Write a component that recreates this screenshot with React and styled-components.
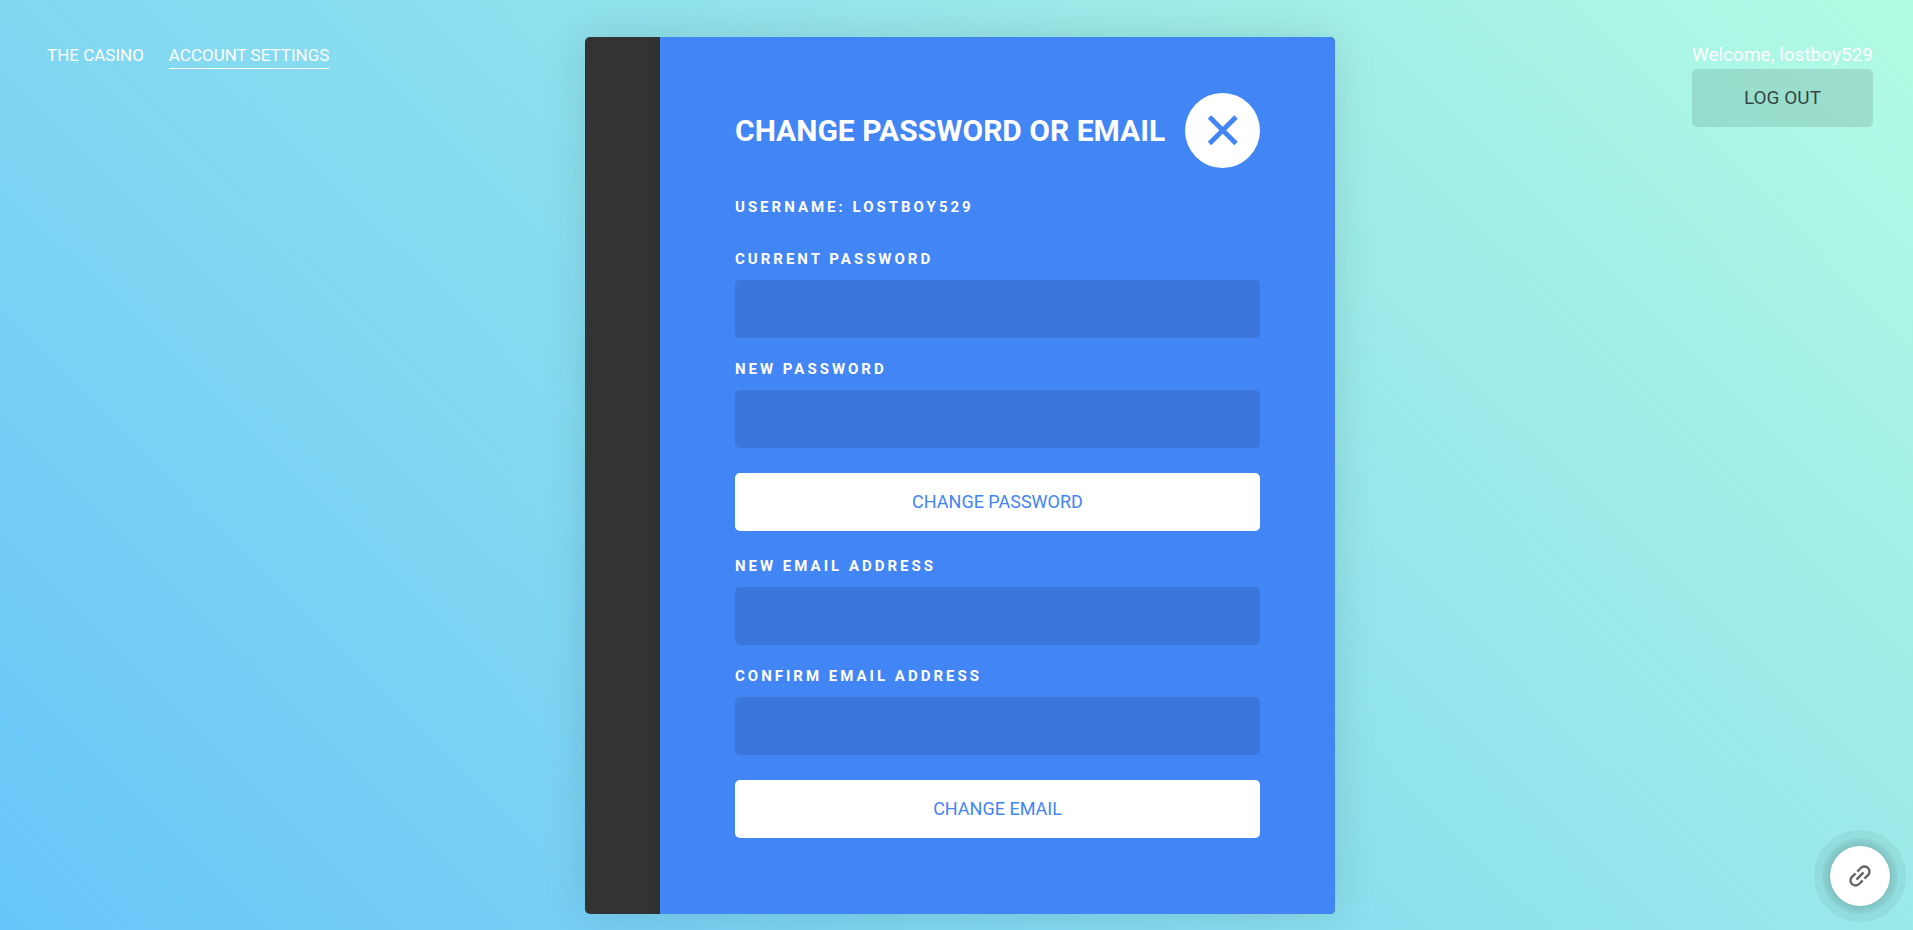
import React from "react";
import styled, { createGlobalStyle } from "styled-components";

const GlobalStyle = createGlobalStyle`
  * { box-sizing: border-box; }
  body {
    margin: 0;
    font-family: Roboto, "Liberation Sans", sans-serif;
  }
  button, input { font-family: inherit; }
`;

const Page = styled.div`
  display: grid;
  grid-template-columns: minmax(0, 1fr) minmax(0, 750px) minmax(0, 1fr);
  align-items: start;
  min-height: 100vh;
  padding: 37px 40px 16px 47px;
  background: linear-gradient(45deg, #68c5f9, #b2fbe3);
`;

const Nav = styled.nav`
  display: flex;
  gap: 25px;
  padding-top: 6px;
`;

const NavLink = styled.a`
  color: #fff;
  font-size: 17px;
  line-height: 25px;
  text-decoration: none;
  text-transform: uppercase;
  white-space: nowrap;
  border-bottom: 1px solid ${(p) => (p.$active ? "#fff" : "transparent")};
`;

const Session = styled.div`
  justify-self: end;
  display: flex;
  flex-direction: column;
  gap: 2px;
  padding-top: 6px;
`;

const Welcome = styled.span`
  color: #fff;
  font-size: 19px;
  line-height: 24px;
  white-space: nowrap;
`;

const Button = styled.button`
  height: 58px;
  padding: 0 20px 2px;
  border: 0;
  border-radius: 5px;
  background: ${(p) => (p.$muted ? "rgba(0, 0, 0, 0.1)" : "#fff")};
  color: ${(p) => (p.$muted ? "rgba(0, 0, 0, 0.7)" : "#4285f4")};
  font-size: ${(p) => (p.$muted ? "19px" : "18px")};
  text-transform: uppercase;
  cursor: pointer;
`;

const Card = styled.main`
  display: flex;
  overflow: hidden;
  border-radius: 5px;
  background: #333;
  box-shadow: 0 0 45px rgba(0, 0, 0, 0.12);
`;

const Rail = styled.div`
  flex: 0 0 75px;
`;

const Panel = styled.section`
  flex: 1;
  padding: 56px 75px 76px;
  background: #4285f4;
  box-shadow: 0 0 10px rgba(0, 0, 0, 0.2);
`;

const PanelHeader = styled.header`
  display: flex;
  align-items: center;
  justify-content: space-between;
  margin-bottom: 28px;
`;

const Title = styled.h1`
  margin: 0;
  color: #fff;
  font-size: 30px;
  font-weight: 700;
  line-height: 36px;
  text-transform: uppercase;
  white-space: nowrap;
`;

const CloseButton = styled.button`
  display: grid;
  place-items: center;
  width: 75px;
  height: 75px;
  padding: 0;
  border: 0;
  border-radius: 50%;
  background: #fff;
  color: #4285f4;
  cursor: pointer;
`;

const labelText = `
  color: #fff;
  font-size: 15px;
  font-weight: 700;
  line-height: 22px;
  letter-spacing: 3px;
  text-transform: uppercase;
`;

const Username = styled.p`
  ${labelText}
  margin: 0 0 30px;
`;

const Form = styled.form`
  display: flex;
  flex-direction: column;
  gap: 20px;

  & + & {
    margin-top: 24px;
  }

  ${Button} {
    margin-top: 5px;
  }
`;

const Field = styled.div`
  display: flex;
  flex-direction: column;
  gap: 10px;
`;

const Label = styled.label`
  ${labelText}
`;

const Input = styled.input`
  width: 100%;
  height: 58px;
  padding: 0 20px;
  border: 0;
  border-radius: 5px;
  background: rgba(0, 0, 0, 0.1);
  color: #fff;
  font-size: 18px;
`;

const LinkFab = styled.button`
  position: fixed;
  right: 23px;
  bottom: 24px;
  display: grid;
  place-items: center;
  width: 60px;
  height: 60px;
  padding: 0;
  border: 0;
  border-radius: 50%;
  background: #fff;
  color: #666;
  box-shadow: 0 0 8px rgba(0, 0, 0, 0.2), 0 0 0 8px rgba(0, 0, 0, 0.05),
    0 0 0 16px rgba(0, 0, 0, 0.05);
  cursor: pointer;
`;

function TextField({ id, label, type }) {
  return (
    <Field>
      <Label htmlFor={id}>{label}</Label>
      <Input id={id} name={id} type={type} />
    </Field>
  );
}

export default function App() {
  const stay = (event) => event.preventDefault();
  return (
    <>
      <GlobalStyle />
      <Page>
        <Nav>
          <NavLink href="#casino">The Casino</NavLink>
          <NavLink href="#account" $active aria-current="page">
            Account Settings
          </NavLink>
        </Nav>
        <Card>
          <Rail />
          <Panel>
            <PanelHeader>
              <Title>Change Password or Email</Title>
              <CloseButton type="button" aria-label="Close">
                <svg width="32" height="32" viewBox="0 0 32 32" aria-hidden="true">
                  <path
                    d="M2.5 2 29 28.5M29 2 2.5 28.5"
                    fill="none"
                    stroke="currentColor"
                    strokeWidth="4.8"
                  />
                </svg>
              </CloseButton>
            </PanelHeader>
            <Username>Username: lostboy529</Username>
            <Form onSubmit={stay}>
              <TextField id="current-password" label="Current Password" type="password" />
              <TextField id="new-password" label="New Password" type="password" />
              <Button type="submit">Change Password</Button>
            </Form>
            <Form onSubmit={stay}>
              <TextField id="new-email" label="New Email Address" type="email" />
              <TextField id="confirm-email" label="Confirm Email Address" type="email" />
              <Button type="submit">Change Email</Button>
            </Form>
          </Panel>
        </Card>
        <Session>
          <Welcome>Welcome, lostboy529</Welcome>
          <Button type="button" $muted>
            Log Out
          </Button>
        </Session>
      </Page>
      <LinkFab type="button" aria-label="Copy link">
        <svg width="30" height="30" viewBox="0 0 24 24" aria-hidden="true">
          <path
            transform="rotate(-45 12 12)"
            fill="currentColor"
            d="M3.9 12c0-1.71 1.39-3.1 3.1-3.1h4V7H7c-2.76 0-5 2.24-5 5s2.24 5 5 5h4v-1.9H7c-1.71 0-3.1-1.39-3.1-3.1zM8 13h8v-2H8v2zm9-6h-4v1.9h4c1.71 0 3.1 1.39 3.1 3.1s-1.39 3.1-3.1 3.1h-4V17h4c2.76 0 5-2.24 5-5s-2.24-5-5-5z"
          />
        </svg>
      </LinkFab>
    </>
  );
}
